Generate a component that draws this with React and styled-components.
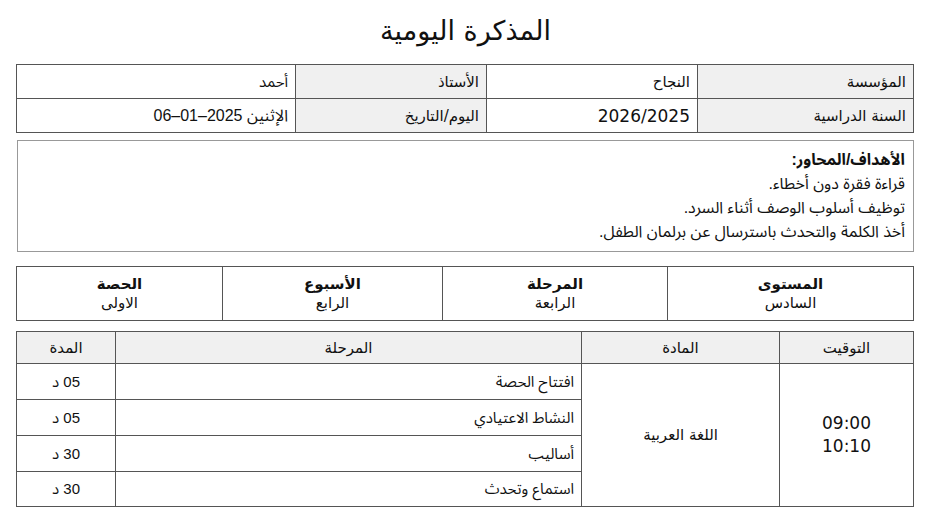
import React from "react";
import styled, { createGlobalStyle } from "styled-components";

const Global = createGlobalStyle`
  html, body { margin: 0; padding: 0; background: #fff; }
  body { color: #111; font-family: "DejaVu Sans", sans-serif; }
`;

const Page = styled.div`
  direction: rtl;
  width: 897px;
  margin: 0 16px 0 17px;
  padding: 12px 0 0 0;
  display: flex;
  flex-direction: column;
`;

const Title = styled.h1`
  margin: 0 0 14px 0;
  text-align: center;
  font-family: "DejaVu Sans", sans-serif;
  font-weight: 500;
  font-size: 27px;
  line-height: 38px;
  color: #111;
`;

const Table = styled.table`
  width: 100%;
  border-collapse: collapse;
  table-layout: fixed;
  margin-bottom: ${(p) => p.$mb || 0}px;
`;

const Cell = styled.td`
  border: 1px solid #555;
  background: ${(p) => (p.$label ? "#f0f0f0" : "#fff")};
  height: ${(p) => p.$h || 33}px;
  padding: 0 7px;
  text-align: ${(p) => p.$align || "right"};
  vertical-align: middle;
  font-family: ${(p) =>
    p.$latin
      ? '"Liberation Sans", "Noto Sans Arabic", sans-serif'
      : '"DejaVu Sans", sans-serif'};
  font-size: ${(p) => p.$fs || 15}px;
  line-height: ${(p) => p.$lh || 20}px;
  white-space: nowrap;
`;

const Goals = styled.div`
  border: 1px solid #999;
  padding: 7px 8px;
  margin: 7px 0 14px 0;
  font-family: "Liberation Sans", "Noto Sans Arabic", sans-serif;
  font-size: 16px;
  line-height: 24px;
`;

const GoalsHead = styled.div`
  font-weight: bold;
`;

const GoalLine = styled.div``;

const InfoLabel = styled.div`
  font-weight: bold;
`;

const InfoValue = styled.div``;

const TimeBox = styled.div`
  font-family: "DejaVu Sans", sans-serif;
  font-size: 17px;
  line-height: 23px;
`;

const steps = [
  ["افتتاح الحصة", "05 د"],
  ["النشاط الاعتيادي", "05 د"],
  ["أساليب", "30 د"],
  ["استماع وتحدث", "30 د"],
];

const info = [
  ["المستوى", "السادس", 246],
  ["المرحلة", "الرابعة", 225],
  ["الأسبوع", "الرابع", 220],
  ["الحصة", "الاولى", 206],
];

export default function App() {
  return (
    <>
      <Global />
      <Page>
        <Title>المذكرة اليومية</Title>

        <Table>
          <colgroup>
            <col style={{ width: 216 }} />
            <col style={{ width: 211 }} />
            <col style={{ width: 191 }} />
            <col style={{ width: 279 }} />
          </colgroup>
          <tbody>
            <tr>
              <Cell $label>المؤسسة</Cell>
              <Cell>النجاح</Cell>
              <Cell $label>الأستاذ</Cell>
              <Cell $latin>أحمد</Cell>
            </tr>
            <tr>
              <Cell $label>السنة الدراسية</Cell>
              <Cell $fs={17}>2026/2025</Cell>
              <Cell $label>اليوم/التاريخ</Cell>
              <Cell $latin $fs={16}>الإثنين 2025–01–06</Cell>
            </tr>
          </tbody>
        </Table>

        <Goals>
          <GoalsHead>الأهداف/المحاور:</GoalsHead>
          <GoalLine>قراءة فقرة دون أخطاء.</GoalLine>
          <GoalLine>توظيف أسلوب الوصف أثناء السرد.</GoalLine>
          <GoalLine>أخذ الكلمة والتحدث باسترسال عن برلمان الطفل.</GoalLine>
        </Goals>

        <Table $mb={10}>
          <colgroup>
            {info.map(([l, , w]) => (
              <col key={l} style={{ width: w }} />
            ))}
          </colgroup>
          <tbody>
            <tr>
              {info.map(([l, v]) => (
                <Cell key={l} $align="center" $h={53} $lh={19}>
                  <InfoLabel>{l}</InfoLabel>
                  <InfoValue>{v}</InfoValue>
                </Cell>
              ))}
            </tr>
          </tbody>
        </Table>

        <Table>
          <colgroup>
            <col style={{ width: 134 }} />
            <col style={{ width: 198 }} />
            <col style={{ width: 466 }} />
            <col style={{ width: 99 }} />
          </colgroup>
          <tbody>
            <tr>
              <Cell $label $align="center" $h={31}>التوقيت</Cell>
              <Cell $label $align="center" $h={31}>المادة</Cell>
              <Cell $label $align="center" $h={31}>المرحلة</Cell>
              <Cell $label $align="center" $h={31}>المدة</Cell>
            </tr>
            {steps.map(([name, dur], i) => (
              <tr key={name}>
                {i === 0 && (
                  <>
                    <Cell rowSpan={4} $align="center">
                      <TimeBox>09:00</TimeBox>
                      <TimeBox>10:10</TimeBox>
                    </Cell>
                    <Cell rowSpan={4} $align="center">
                      اللغة العربية
                    </Cell>
                  </>
                )}
                <Cell $h={i === 3 ? 34 : 35} $latin>{name}</Cell>
                <Cell $h={i === 3 ? 34 : 35} $latin $align="center">
                  {dur}
                </Cell>
              </tr>
            ))}
          </tbody>
        </Table>
      </Page>
    </>
  );
}
